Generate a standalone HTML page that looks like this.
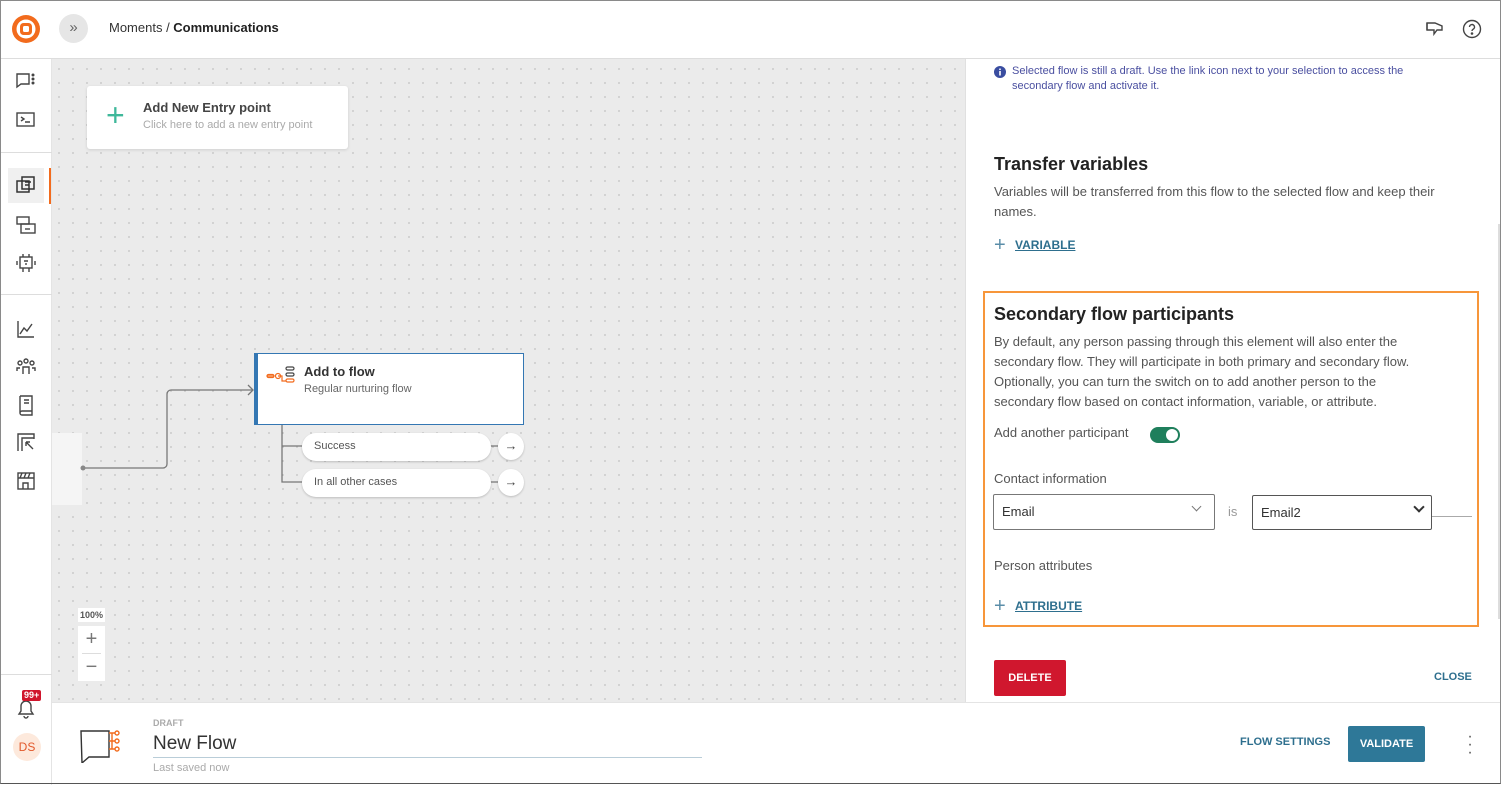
<!DOCTYPE html>
<html><head><meta charset="utf-8"><style>
*{box-sizing:border-box;margin:0;padding:0}
body{width:1501px;height:785px;overflow:hidden;font-family:"Liberation Sans",sans-serif;background:#fff;position:relative;color:#333}
.abs{position:absolute}
#frame{position:absolute;left:0;top:0;width:1501px;height:784px;border:1px solid #8a8a8a;border-bottom:1px solid #555;pointer-events:none;z-index:50}
#top{left:0;top:0;width:1501px;height:59px;border-bottom:1px solid #ddd;background:#fff}
#side{left:0;top:59px;width:52px;height:726px;background:#fff;border-right:1px solid #e4e4e4}
#canvas{left:52px;top:59px;width:913px;height:643px;background-color:#ebebeb;background-image:radial-gradient(circle,#c2c2c2 0.7px,transparent 1px);background-size:14px 14px;background-position:0px 3px}
#panel{left:965px;top:59px;width:536px;height:643px;background:#fff;border-left:1px solid #e0e0e0}
#bottom{left:52px;top:702px;width:1449px;height:82px;background:#fff;border-top:1px solid #e4e4e4}
.ic{position:absolute;left:15px}
.txt{font-size:13px;color:#555;line-height:20px}
h3{font-size:18px;font-weight:bold;color:#222}
.link{color:#2e6f8e;font-weight:bold;font-size:12px;text-decoration:underline}
.sel{position:absolute;height:36px;border:1px solid #777;border-radius:2px;font-size:13px;padding:9px 8px;color:#333}
</style></head><body>
<div id="frame"></div>
<div class="abs" id="top">
 <svg class="abs" style="left:11px;top:14px" width="30" height="30" viewBox="0 0 30 30"><circle cx="15" cy="15" r="14" fill="#f26b1d"/><circle cx="15" cy="15" r="9.5" fill="#fff"/><rect x="9" y="9" width="12" height="12" rx="3.5" fill="#f26b1d"/><rect x="12" y="12" width="6" height="6" rx="1.5" fill="#fff"/></svg>
 <div class="abs" style="left:59px;top:14px;width:29px;height:29px;border-radius:50%;background:#e6e6e6;font-size:15px;color:#666;text-align:center;line-height:28px">»</div>
 <div class="abs" style="left:109px;top:20px;font-size:13px;color:#333">Moments / <b style="color:#222">Communications</b></div>
 <svg class="abs" style="left:1425px;top:20px" width="20" height="18" viewBox="0 0 20 18" fill="none" stroke="#444" stroke-width="1.4"><path d="M2 3h8l7 3v4h-5l-3 4v-4H2z"/><path d="M2 3v7"/></svg>
 <svg class="abs" style="left:1462px;top:19px" width="20" height="20" viewBox="0 0 20 20" fill="none" stroke="#444" stroke-width="1.4"><circle cx="10" cy="10" r="8.5"/><path d="M7.5 8a2.5 2.5 0 1 1 3.5 2.3c-.7.4-1 .8-1 1.7"/><circle cx="10" cy="14.5" r=".6" fill="#444"/></svg>
</div>
<div class="abs" id="side">
 <svg class="ic" style="top:12px" width="22" height="20" viewBox="0 0 22 20" fill="none" stroke="#444" stroke-width="1.4"><path d="M2 3h12v10H6l-4 3z"/><circle cx="18" cy="4" r=".8" fill="#444"/><circle cx="18" cy="8" r=".8" fill="#444"/><circle cx="18" cy="12" r=".8" fill="#444"/></svg>
 <svg class="ic" style="top:51px" width="22" height="20" viewBox="0 0 22 20" fill="none" stroke="#444" stroke-width="1.4"><rect x="2" y="3" width="17" height="13"/><path d="M6 7l3 2-3 2M10 12h5"/></svg>
 <div class="abs" style="left:0;top:93px;width:52px;border-top:1px solid #ddd"></div>
 <div class="abs" style="left:8px;top:109px;width:36px;height:35px;background:#f0f0f0"></div>
 <div class="abs" style="left:49px;top:109px;width:2px;height:36px;background:#f26b1d"></div>
 <svg class="ic" style="top:116px" width="22" height="22" viewBox="0 0 22 22" fill="none" stroke="#333" stroke-width="1.5"><rect x="2" y="6" width="12" height="11"/><rect x="7" y="2" width="12" height="12"/><path d="M10 7h6M10 10h4"/></svg>
 <svg class="ic" style="top:155px" width="22" height="22" viewBox="0 0 22 22" fill="none" stroke="#444" stroke-width="1.4"><rect x="2" y="3" width="12" height="7"/><rect x="6" y="10" width="14" height="9"/><path d="M10 15h5"/></svg>
 <svg class="ic" style="top:193px" width="22" height="22" viewBox="0 0 22 22" fill="none" stroke="#444" stroke-width="1.4"><rect x="5" y="5" width="12" height="11"/><path d="M8 2v3M14 2v3M2 9v4M20 9v4M8 16v4M14 16v4M9 9h4M11 11v2"/></svg>
 <div class="abs" style="left:0;top:235px;width:52px;border-top:1px solid #ddd"></div>
 <svg class="ic" style="top:259px" width="22" height="22" viewBox="0 0 22 22" fill="none" stroke="#444" stroke-width="1.4"><path d="M3 3v16h16M5 16l4-6 3 3 5-7"/></svg>
 <svg class="ic" style="top:297px" width="22" height="22" viewBox="0 0 22 22" fill="none" stroke="#444" stroke-width="1.4"><circle cx="11" cy="5" r="2"/><circle cx="5" cy="7" r="2"/><circle cx="17" cy="7" r="2"/><path d="M8 18v-7h6v7M2 15v-3h3M20 15v-3h-3"/></svg>
 <svg class="ic" style="top:335px" width="22" height="22" viewBox="0 0 22 22" fill="none" stroke="#444" stroke-width="1.4"><path d="M5 2h12v15H7a2 2 0 0 0 0 4h10v-4M5 2v17"/><path d="M9 6h5M9 9h5"/></svg>
 <svg class="ic" style="top:372px" width="22" height="22" viewBox="0 0 22 22" fill="none" stroke="#444" stroke-width="1.4"><path d="M3 20V3h16v5M7 20V7h12M11 11l7 7M11 11v4M11 11h4"/></svg>
 <svg class="ic" style="top:410px" width="22" height="22" viewBox="0 0 22 22" fill="none" stroke="#444" stroke-width="1.4"><rect x="3" y="4" width="16" height="16"/><path d="M3 9h16M7 4l-2 5M11 4l-2 5M15 4l-2 5M8 20v-6h5v6"/></svg>
 <div class="abs" style="left:0;top:615px;width:52px;border-top:1px solid #ddd"></div>
 <svg class="ic" style="top:638px" width="22" height="22" viewBox="0 0 22 22" fill="none" stroke="#444" stroke-width="1.4"><path d="M4 17h14l-2-3V9a5 5 0 0 0-10 0v5zM9 19a2 2 0 0 0 4 0"/></svg>
 <div class="abs" style="left:22px;top:631px;background:#d0152c;color:#fff;font-size:9px;font-weight:bold;padding:0 2px;border-radius:2px;line-height:11px">99+</div>
 <div class="abs" style="left:13px;top:674px;width:28px;height:28px;border-radius:50%;background:#fde9dc;color:#e2582a;font-size:12px;text-align:center;line-height:28px">DS</div>
</div>
<div class="abs" id="canvas">
 <div class="abs" style="left:35px;top:27px;width:261px;height:63px;background:#fff;border-radius:3px;box-shadow:0 1px 3px rgba(0,0,0,.12)">
  <div class="abs" style="left:19px;top:9px;font-size:32px;color:#3fb89a;font-weight:300;line-height:40px">+</div>
  <div class="abs" style="left:56px;top:14px;font-size:13px;font-weight:bold;color:#444">Add New Entry point</div>
  <div class="abs" style="left:56px;top:33px;font-size:11px;color:#aaa">Click here to add a new entry point</div>
 </div>
 <div class="abs" style="left:0;top:374px;width:30px;height:72px;background:#f5f5f5"></div>
 <svg class="abs" style="left:0;top:0" width="913" height="643">
  <path d="M31 409H111a4 4 0 0 0 4-4V335a4 4 0 0 1 4-4h82" fill="none" stroke="#777" stroke-width="1.3"/>
  <path d="M196 326l5 5-5 5" fill="none" stroke="#777" stroke-width="1.3"/>
  <circle cx="31" cy="409" r="2.5" fill="#888"/>
  <path d="M230 366v57h20M230 387h20M438 387h8M438 423h8" fill="none" stroke="#777" stroke-width="1.3"/>
 </svg>
 <div class="abs" style="left:202px;top:294px;width:270px;height:72px;background:#fff;border:1px solid #3477b3;border-left:4px solid #3477b3">
  <svg class="abs" style="left:8px;top:12px" width="32" height="26" viewBox="0 0 32 26" fill="none" stroke-width="1.2"><path d="M1 10h7M12 10h4v5h4" stroke="#f26b1d"/><rect x="1" y="8.5" width="7" height="3" rx="1.5" stroke="#f26b1d"/><circle cx="12" cy="10" r="2.5" stroke="#f26b1d"/><rect x="20" y="13" width="8" height="3" rx="1.5" stroke="#f26b1d"/><rect x="20" y="1" width="8" height="3" rx="1.5" stroke="#444"/><rect x="20" y="7" width="8" height="3" rx="1.5" stroke="#444"/></svg>
  <div class="abs" style="left:46px;top:10px;font-size:13px;font-weight:bold;color:#333">Add to flow</div>
  <div class="abs" style="left:46px;top:29px;font-size:11px;color:#666">Regular nurturing flow</div>
 </div>
 <div class="abs" style="left:250px;top:374px;width:189px;height:28px;background:#fff;border-radius:14px;box-shadow:0 1px 2px rgba(0,0,0,.2);font-size:11px;color:#555;padding:7px 12px">Success</div>
 <div class="abs" style="left:250px;top:410px;width:189px;height:28px;background:#fff;border-radius:14px;box-shadow:0 1px 2px rgba(0,0,0,.2);font-size:11px;color:#555;padding:7px 12px">In all other cases</div>
 <div class="abs" style="left:446px;top:374px;width:26px;height:27px;background:#fff;border-radius:50%;box-shadow:0 1px 2px rgba(0,0,0,.2);text-align:center;font-size:13px;line-height:26px;color:#444">→</div>
 <div class="abs" style="left:446px;top:410px;width:26px;height:27px;background:#fff;border-radius:50%;box-shadow:0 1px 2px rgba(0,0,0,.2);text-align:center;font-size:13px;line-height:26px;color:#444">→</div>
 <div class="abs" style="left:26px;top:549px;width:27px;height:14px;background:#fff;font-size:9px;font-weight:bold;color:#555;text-align:center;line-height:14px">100%</div>
 <div class="abs" style="left:26px;top:567px;width:27px;height:55px;background:#fff;text-align:center;color:#777">
  <div style="font-size:20px;line-height:27px;border-bottom:1px solid #ddd;margin:0 4px">+</div><div style="font-size:20px;line-height:26px">−</div></div>
</div>
<div class="abs" id="panel">
 <svg class="abs" style="left:28px;top:7px" width="12" height="12" viewBox="0 0 12 12"><circle cx="6" cy="6" r="6" fill="#3a4da0"/><rect x="5.2" y="5" width="1.6" height="4.5" fill="#fff"/><circle cx="6" cy="3.3" r=".9" fill="#fff"/></svg>
 <div class="abs" style="left:46px;top:5px;font-size:11px;color:#4a4fa0;line-height:15px;width:425px">Selected flow is still a draft. Use the link icon next to your selection to access the secondary flow and activate it.</div>
 <h3 class="abs" style="left:28px;top:95px">Transfer variables</h3>
 <div class="abs txt" style="left:28px;top:123px;width:480px">Variables will be transferred from this flow to the selected flow and keep their names.</div>
 <div class="abs" style="left:28px;top:177px;font-size:20px;color:#5a8da8;font-weight:300;line-height:18px">+</div>
 <div class="abs link" style="left:49px;top:179px">VARIABLE</div>
 <div class="abs" style="left:17px;top:232px;width:496px;height:336px;border:2px solid #f7963a"></div>
 <h3 class="abs" style="left:28px;top:245px">Secondary flow participants</h3>
 <div class="abs txt" style="left:28px;top:273px;width:432px">By default, any person passing through this element will also enter the secondary flow. They will participate in both primary and secondary flow. Optionally, you can turn the switch on to add another person to the secondary flow based on contact information, variable, or attribute.</div>
 <div class="abs txt" style="left:28px;top:364px">Add another participant</div>
 <div class="abs" style="left:184px;top:368px;width:30px;height:16px;border-radius:8px;background:#1f7f5c"><div class="abs" style="right:2px;top:2px;width:12px;height:12px;border-radius:50%;background:#fff"></div></div>
 <div class="abs txt" style="left:28px;top:410px">Contact information</div>
 <div class="sel" style="left:27px;top:435px;width:222px">Email<span style="position:absolute;right:14px;top:8px;width:7px;height:7px;border-right:1px solid #777;border-bottom:1px solid #777;transform:rotate(45deg)"></span></div>
 <div class="abs" style="left:262px;top:445px;font-size:13px;color:#999">is</div>
 <div class="sel" style="left:286px;top:436px;width:180px;height:35px;border-color:#555">Email2<span style="position:absolute;right:8px;top:7px;width:8px;height:8px;border-right:2px solid #333;border-bottom:2px solid #333;transform:rotate(45deg)"></span></div>
 <div class="abs" style="left:466px;top:457px;width:40px;border-top:1px solid #aaa"></div>
 <div class="abs txt" style="left:28px;top:497px">Person attributes</div>
 <div class="abs" style="left:28px;top:538px;font-size:20px;color:#5a8da8;font-weight:300;line-height:18px">+</div>
 <div class="abs link" style="left:49px;top:540px">ATTRIBUTE</div>
 <div class="abs" style="left:28px;top:601px;width:72px;height:36px;background:#d0172e;border-radius:2px;color:#fff;font-size:11px;font-weight:bold;text-align:center;line-height:36px">DELETE</div>
 <div class="abs" style="left:468px;top:612px;font-size:11px;font-weight:bold;color:#2e6f8e">CLOSE</div>
 <div class="abs" style="left:532px;top:165px;width:2px;height:395px;background:#ddd"></div>
</div>
<div class="abs" id="bottom">
 <svg class="abs" style="left:27px;top:24px" width="46" height="36" viewBox="0 0 46 36" fill="none" stroke-width="1.4"><path d="M2 4h28v26H10l-7 6z" stroke="#333"/><path d="M30 6h6M30 14h6M30 22h6M33 6v16" stroke="#f26b1d"/><circle cx="38" cy="6" r="2" stroke="#f26b1d"/><circle cx="38" cy="14" r="2" stroke="#f26b1d"/><circle cx="38" cy="22" r="2" stroke="#f26b1d"/></svg>
 <div class="abs" style="left:101px;top:15px;font-size:9px;font-weight:bold;color:#aaa">DRAFT</div>
 <div class="abs" style="left:101px;top:30px;font-size:19px;color:#333">New Flow</div>
 <div class="abs" style="left:101px;top:54px;width:549px;border-top:1px solid #b9cdd8"></div>
 <div class="abs" style="left:101px;top:59px;font-size:11px;color:#aaa">Last saved now</div>
 <div class="abs" style="left:1188px;top:33px;font-size:11px;font-weight:bold;color:#2e6f8e">FLOW SETTINGS</div>
 <div class="abs" style="left:1296px;top:23px;width:77px;height:36px;background:#2e7898;border-radius:2px;color:#fff;font-size:11px;font-weight:bold;text-align:center;line-height:36px">VALIDATE</div>
 <div class="abs" style="left:1415px;top:30px;font-size:16px;color:#555;line-height:8px;width:6px;text-align:center">·<br>·<br>·</div>
</div>
</body></html>
